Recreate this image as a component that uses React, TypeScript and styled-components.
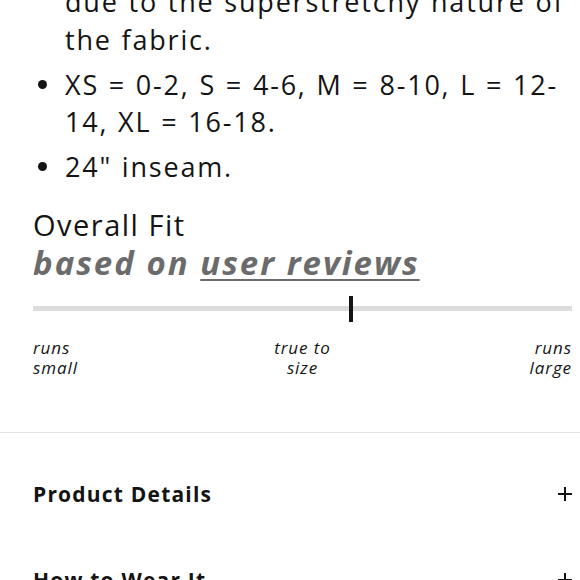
import React from "react";
import styled, { createGlobalStyle } from "styled-components";

const GlobalStyle = createGlobalStyle`
  html, body { margin: 0; padding: 0; background: #fff; overflow: hidden; }
  body { font-family: "Open Sans", "DejaVu Sans", sans-serif; color: #141414; }
`;

const Page = styled.div`
  width: 580px;
  height: 580px;
  overflow: hidden;
`;

const Section = styled.section`
  padding: 0 8px 54px 33px;
`;

const BulletList = styled.ul`
  list-style: none;
  margin: -17px 0 0 0;
  padding: 0;
`;

const Item = styled.li<{ $bullet?: boolean }>`
  position: relative;
  padding-left: 32px;
  font-size: 27px;
  line-height: 37.5px;
  letter-spacing: 1.8px;
  word-spacing: 1px;
  & + & { margin-top: 7.5px; }
  &::before {
    content: "";
    display: ${(p) => (p.$bullet === false ? "none" : "block")};
    position: absolute;
    left: 5px;
    top: 14px;
    width: 9px;
    height: 9px;
    border-radius: 50%;
    background: #141414;
  }
`;

const FitTitle = styled.h2`
  margin: 21px 0 0 0;
  font-size: 29px;
  line-height: 36px;
  font-weight: 400;
  letter-spacing: 1.5px;
`;

const FitSubtitle = styled.p`
  margin: 0;
  font-size: 33px;
  line-height: 40px;
  font-weight: 700;
  font-style: italic;
  color: #6b6b6b;
  letter-spacing: 2px;
`;

const ReviewLink = styled.a`
  color: inherit;
  text-decoration: underline;
  text-decoration-thickness: 2px;
  text-underline-offset: 4px;
`;

const Meter = styled.div`
  position: relative;
  margin-top: 13px;
  height: 26px;
  display: flex;
  align-items: center;
`;

const Track = styled.div`
  flex: 1;
  height: 5px;
  background: #dcdcdc;
`;

const Marker = styled.div`
  position: absolute;
  top: 0;
  width: 4px;
  height: 26px;
  background: #141414;
  transform: translateX(-50%);
`;

const Labels = styled.div`
  margin-top: 16px;
  display: grid;
  grid-template-columns: 1fr 1fr 1fr;
  font-size: 17px;
  line-height: 20px;
  font-style: italic;
  letter-spacing: 0.9px;
`;

const Label = styled.span<{ $align: "left" | "center" | "right" }>`
  text-align: ${(p) => p.$align};
`;

const Accordion = styled.div`
  border-top: 1px solid #e3e3e3;
  padding: 18px 8px 0 33px;
`;

const AccordionRow = styled.div`
  display: flex;
  align-items: center;
  justify-content: space-between;
  padding: 29px 0;
`;

const RowTitle = styled.h3`
  margin: 0;
  font-size: 21px;
  line-height: 28px;
  font-weight: 700;
  letter-spacing: 1.2px;
`;

const PlusIcon = () => (
  <svg width="14" height="14" viewBox="0 0 14 14" aria-hidden="true">
    <path d="M7 0v14M0 7h14" stroke="#141414" strokeWidth="2" fill="none" />
  </svg>
);

const fitPosition = 0.59;

export default function App() {
  return (
    <Page>
      <GlobalStyle />
      <Section>
        <BulletList>
          <Item $bullet={false}>due to the superstretchy nature of the fabric.</Item>
          <Item>XS = 0-2, S = 4-6, M = 8-10, L = 12-14, XL = 16-18.</Item>
          <Item>24" inseam.</Item>
        </BulletList>
        <FitTitle>Overall Fit</FitTitle>
        <FitSubtitle>
          based on <ReviewLink href="#">user reviews</ReviewLink>
        </FitSubtitle>
        <Meter>
          <Track />
          <Marker style={{ left: `${fitPosition * 100}%` }} />
        </Meter>
        <Labels>
          <Label $align="left">runs<br />small</Label>
          <Label $align="center">true to<br />size</Label>
          <Label $align="right">runs<br />large</Label>
        </Labels>
      </Section>
      <Accordion>
        <AccordionRow>
          <RowTitle>Product Details</RowTitle>
          <PlusIcon />
        </AccordionRow>
        <AccordionRow>
          <RowTitle>How to Wear It</RowTitle>
          <PlusIcon />
        </AccordionRow>
      </Accordion>
    </Page>
  );
}
